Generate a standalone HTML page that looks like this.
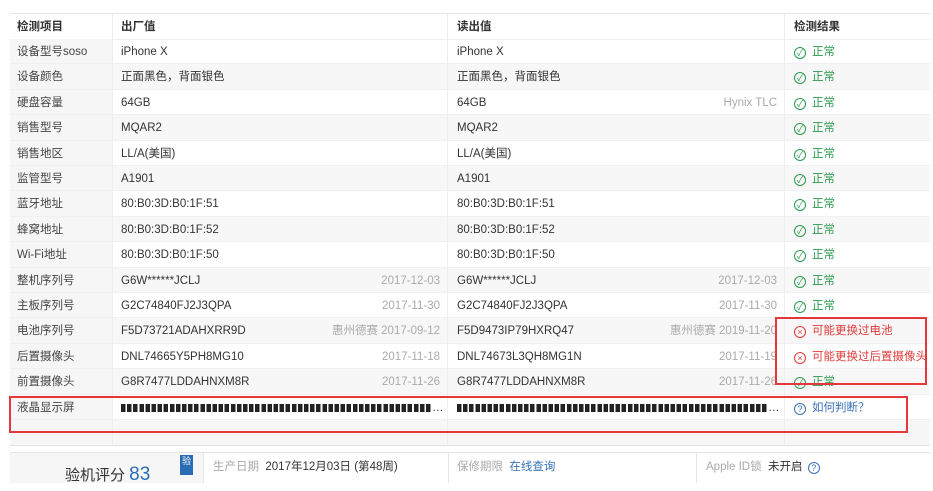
<!DOCTYPE html>
<html><head><meta charset="utf-8">
<style>
*{margin:0;padding:0;box-sizing:border-box}
body{width:933px;height:482px;overflow:hidden;background:#fff;font-family:"Liberation Sans","Noto Sans CJK SC",sans-serif;font-size:11.5px;color:#333;position:relative}
.tbl{position:absolute;left:10px;top:13px;width:920px;border-top:1px solid #e6e6e6}
.r{position:absolute;left:0;width:920px;height:25.4px;border-bottom:1px solid #f0f0f0}
.r.g{background:#f7f7f7}
.c{position:absolute;top:0;height:100%;line-height:27px;white-space:nowrap}
.c1{left:0;width:103px;padding-left:7px;background:#f6f6f6;border-right:1px solid #eee;color:#444}
.c2{left:103px;width:335px;padding-left:8px;border-right:1px solid #eee}
.c3{left:438px;width:337px;padding-left:9px;border-right:1px solid #eee}
.c4{left:775px;width:145px;padding-left:9px}
.d{position:absolute;right:7px;top:0;color:#aaa}
.ok{color:#2c9a4f}.bad{color:#e03a3a}.q{color:#3a72b8}
.ic{display:inline-block;width:12px;height:12px;border-radius:50%;border:1.3px solid currentColor;vertical-align:-1px;margin-right:6px;position:relative;font-size:9px;line-height:10px;text-align:center}
.h{font-weight:bold;color:#333}
.blk{display:inline-block;height:8px;vertical-align:-1px;background:repeating-linear-gradient(90deg,#222 0 4.5px,transparent 4.5px 6.1px)}
.box{position:absolute;border:2.5px solid #e5383b}
.bot{position:absolute;left:10px;top:452px;width:920px;height:30px;background:#fff;border-top:1px solid #e3e3e3}
.bot div{position:absolute;top:0;height:30px;line-height:28px;white-space:nowrap}
.lab{color:#aaa}
</style></head><body>
<div class="tbl">
<div class="r" style="top:0;height:26px"><div class="c c1 h" style="background:#fff">检测项目</div><div class="c c2 h">出厂值</div><div class="c c3 h">读出值</div><div class="c c4 h">检测结果</div></div>
</div>
<div id="rows" class="tbl" style="top:39px;border:none"></div>
<script>
var R=[["设备型号soso","iPhone X","","iPhone X","",0],
["设备颜色","正面黑色，背面银色","","正面黑色，背面银色","",0],
["硬盘容量","64GB","","64GB","Hynix TLC",0],
["销售型号","MQAR2","","MQAR2","",0],
["销售地区","LL/A(美国)","","LL/A(美国)","",0],
["监管型号","A1901","","A1901","",0],
["蓝牙地址","80:B0:3D:B0:1F:51","","80:B0:3D:B0:1F:51","",0],
["蜂窝地址","80:B0:3D:B0:1F:52","","80:B0:3D:B0:1F:52","",0],
["Wi-Fi地址","80:B0:3D:B0:1F:50","","80:B0:3D:B0:1F:50","",0],
["整机序列号","G6W******JCLJ","2017-12-03","G6W******JCLJ","2017-12-03",0],
["主板序列号","G2C74840FJ2J3QPA","2017-11-30","G2C74840FJ2J3QPA","2017-11-30",0],
["电池序列号","F5D73721ADAHXRR9D","惠州德赛 2017-09-12","F5D9473IP79HXRQ47","惠州德赛 2019-11-20",1,"可能更换过电池"],
["后置摄像头","DNL74665Y5PH8MG10","2017-11-18","DNL74673L3QH8MG1N","2017-11-19",1,"可能更换过后置摄像头"],
["前置摄像头","G8R7477LDDAHNXM8R","2017-11-26","G8R7477LDDAHNXM8R","2017-11-26",0],
["液晶显示屏","#","","#","",2]];
var h="";
for(var i=0;i<R.length;i++){var x=R[i];
var v2=x[1]=="#"?'<span class="blk" style="width:311px"></span>…':x[1];
var v3=x[3]=="#"?'<span class="blk" style="width:311px"></span>…':x[3];
var res=x[5]==0?'<span class="ok"><span class="ic">✓</span>正常</span>':x[5]==1?'<span class="bad"><span class="ic">×</span>'+x[6]+'</span>':'<span class="q"><span class="ic">?</span>如何判断？</span>';
h+='<div class="r'+(i%2?' g':'')+'" style="top:'+(i*25.4)+'px"><div class="c c1">'+x[0]+'</div><div class="c c2">'+v2+(x[2]?'<span class="d">'+x[2]+'</span>':'')+'</div><div class="c c3">'+v3+(x[4]?'<span class="d">'+x[4]+'</span>':'')+'</div><div class="c c4">'+res+'</div></div>';}
h+='<div class="r g" style="top:'+(15*25.4)+'px;height:26px;border-bottom:1px solid #e3e3e3"><div class="c c1"></div><div class="c c2"></div><div class="c c3"></div></div>';
document.getElementById("rows").innerHTML=h;
</script>
<div class="box" style="left:775px;top:317px;width:152px;height:68px"></div>
<div class="box" style="left:9px;top:396px;width:899px;height:37px"></div>
<div class="bot">
<div style="left:0;width:193px;background:#f6f6f6;height:30px"></div>
<div style="left:55px;top:8px;font-size:15px;color:#333">验机评分 <span style="color:#2a6db5;font-size:19px">83</span></div>
<div style="left:170px;top:2px;width:13px;height:20px;background:#2a6db5;color:#fff;font-size:9px;line-height:13px;text-align:center">验</div>
<div style="left:193px;width:1px;background:#e6e6e6"></div>
<div style="left:203px"><span class="lab">生产日期</span>&nbsp;&nbsp;2017年12月03日 (第48周)</div>
<div style="left:438px;width:1px;background:#e6e6e6"></div>
<div style="left:447px"><span class="lab">保修期限</span>&nbsp;&nbsp;<span class="q">在线查询</span></div>
<div style="left:686px;width:1px;background:#e6e6e6"></div>
<div style="left:696px"><span class="lab">Apple ID锁</span>&nbsp;&nbsp;未开启 <span class="q"><span class="ic" style="margin-left:2px">?</span></span></div>
</div>
</body></html>
